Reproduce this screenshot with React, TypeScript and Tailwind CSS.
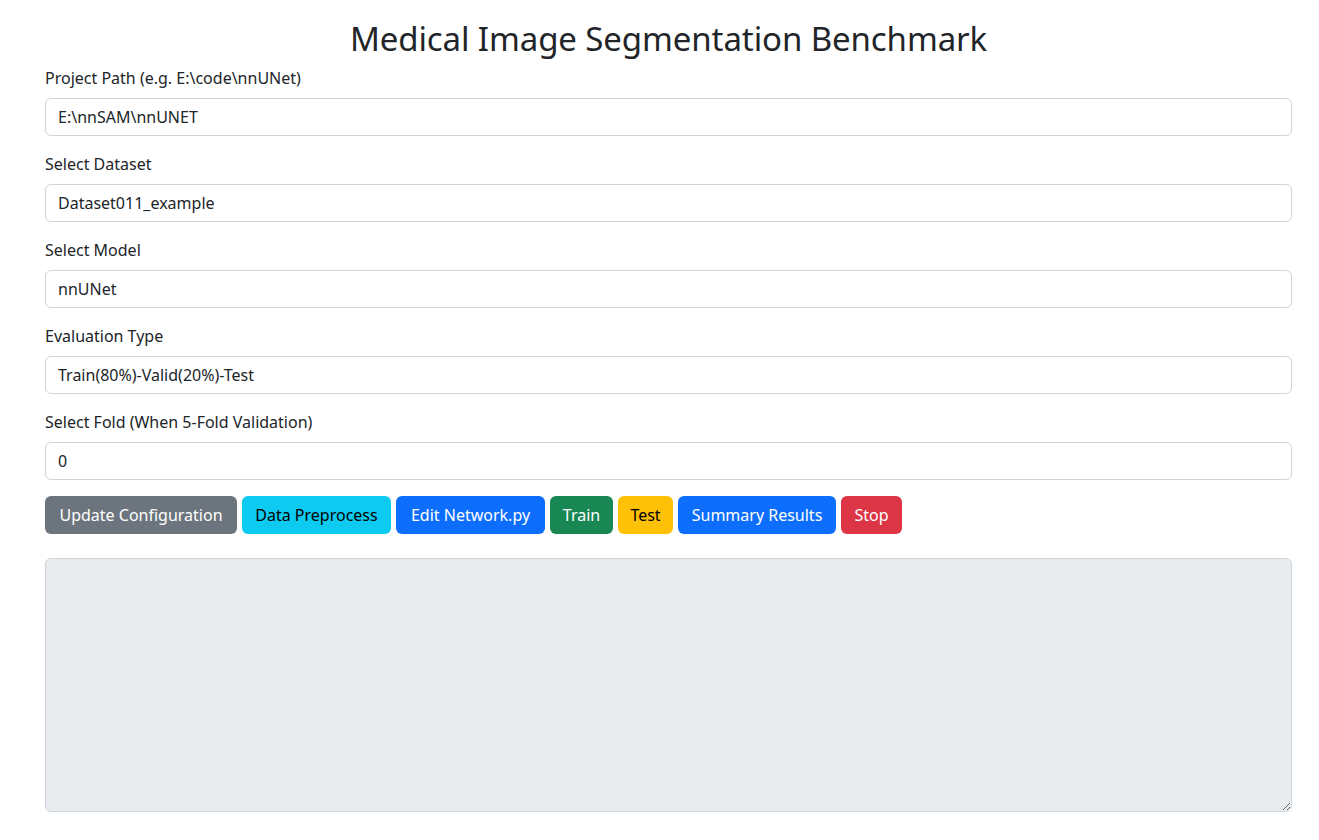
import React from "react";

const fields = [
  { label: "Project Path (e.g. E:\\code\\nnUNet)", value: "E:\\nnSAM\\nnUNET" },
  { label: "Select Dataset", value: "Dataset011_example" },
  { label: "Select Model", value: "nnUNet" },
  { label: "Evaluation Type", value: "Train(80%)-Valid(20%)-Test" },
  { label: "Select Fold (When 5-Fold Validation)", value: "0" },
];

const buttons = [
  { text: "Update Configuration", cls: "bg-[#6c757d] text-white w-[192px]" },
  { text: "Data Preprocess", cls: "bg-[#0dcaf0] text-black w-[149px]" },
  { text: "Edit Network.py", cls: "bg-[#0d6efd] text-white w-[149px]" },
  { text: "Train", cls: "bg-[#198754] text-white w-[63px]" },
  { text: "Test", cls: "bg-[#ffc107] text-black w-[55px]" },
  { text: "Summary Results", cls: "bg-[#0d6efd] text-white w-[158px]" },
  { text: "Stop", cls: "bg-[#dc3545] text-white w-[61px]" },
];

export default function App() {
  return (
    <div className="min-h-screen bg-white text-[#212529] font-['Noto_Sans',sans-serif]">
      <div className="ml-[45px] w-[1247px] pt-[19px]">
        <h1 className="text-center text-[33px] leading-[39px] mb-2 font-normal tracking-[-0.1px]">
          Medical Image Segmentation Benchmark
        </h1>

        {fields.map((f) => (
          <div key={f.label} className="mb-4">
            <label className="block text-base leading-6 mb-2">{f.label}</label>
            <input
              readOnly
              value={f.value}
              className="block w-full h-[38px] px-3 text-base border border-[#ced4da] rounded-[6px] bg-white outline-none"
            />
          </div>
        ))}

        <div className="flex gap-[5px]">
          {buttons.map((b) => (
            <button
              key={b.text}
              className={`h-[38px] rounded-[6px] text-base text-center whitespace-nowrap ${b.cls}`}
            >
              {b.text}
            </button>
          ))}
        </div>

        <textarea
          disabled
          className="block w-full h-[254px] mt-6 border border-[#ced4da] rounded-[6px] bg-[#e9ecef]"
        />
      </div>
    </div>
  );
}
